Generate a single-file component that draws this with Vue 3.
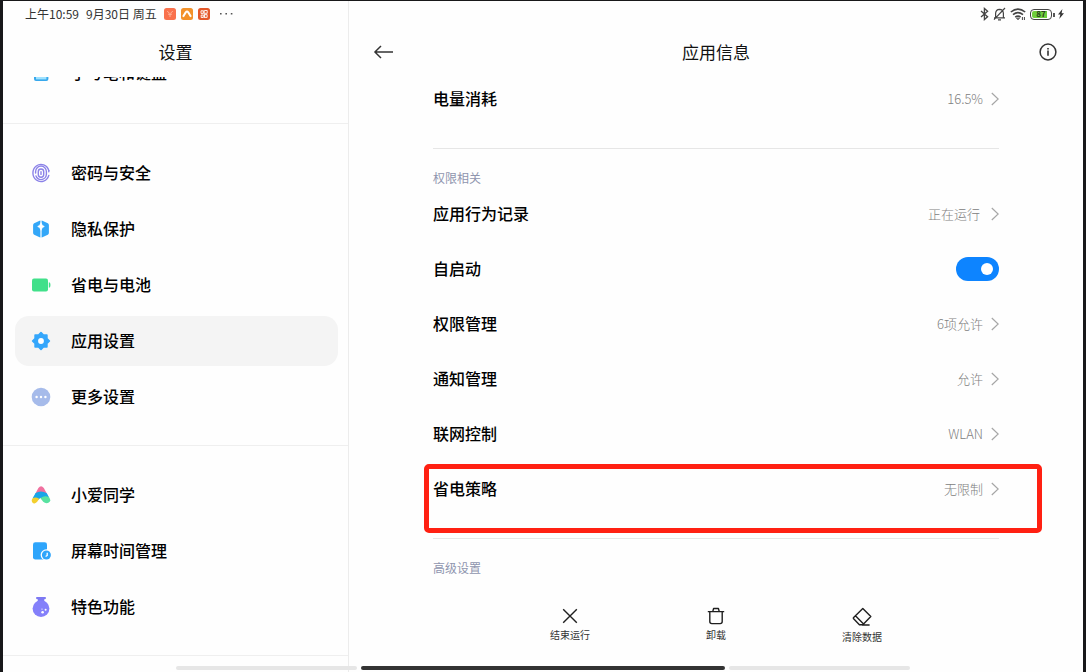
<script setup>
import { ref } from 'vue'

const groups = [
  [{ name: '手写笔和键盘', icon: 'pen' }],
  [
    { name: '密码与安全', icon: 'finger' },
    { name: '隐私保护', icon: 'privacy' },
    { name: '省电与电池', icon: 'battery' },
    { name: '应用设置', icon: 'gear' },
    { name: '更多设置', icon: 'more' },
  ],
  [
    { name: '小爱同学', icon: 'ai' },
    { name: '屏幕时间管理', icon: 'time' },
    { name: '特色功能', icon: 'flask' },
  ],
]
const selected = ref('应用设置')
const autoStart = ref(true)

const permissions = [
  { name: '应用行为记录', value: '正在运行', wide: true },
  { name: '自启动', toggle: true },
  { name: '权限管理', value: '6项允许' },
  { name: '通知管理', value: '允许' },
  { name: '联网控制', value: 'WLAN' },
  { name: '省电策略', value: '无限制', marked: true },
]
</script>

<template>
  <div class="screen">
    <aside class="side">
      <div class="status">
        <span>上午10:59</span>
        <span class="date">9月30日 周五</span>
        <svg class="app" viewBox="0 0 12 12"><rect width="12" height="12" rx="2.5" fill="#f9714d" /><path d="M3.2 3l2 2M8.8 3l-2 2M4 6.2h4M6 5v4" stroke="#ffc3ab" stroke-width=".8" fill="none" /></svg>
        <svg class="app" viewBox="0 0 12 12"><rect width="12" height="12" rx="2.5" fill="#f3922b" /><path d="M2 8.8L4.7 4.4Q6 2.8 7.3 4.4L10 8.8" stroke="#fff" stroke-width="2" fill="none" /></svg>
        <svg class="app" viewBox="0 0 12 12"><rect width="12" height="12" rx="2.5" fill="#e4582a" /><path d="M3 2.8h2.3v2.6H3zM6.7 2.5h2.5v2.8H6.7M3.2 7h2v2.5h-2zM6.6 6.6h2.5v2.8H6.6zM6.2 2v8" stroke="#fff" stroke-width=".9" fill="none" /></svg>
        <svg class="dots" viewBox="0 0 13 4"><path d="M0 1h1.6v1.6H0zM5.4 1H7v1.6H5.4zM10.8 1h1.6v1.6h-1.6z" fill="#555" /></svg>
      </div>
      <header class="side-head"><h1>设置</h1></header>
      <nav class="side-scroll">
        <div class="side-list">
          <div v-for="(group, g) in groups" :key="g" class="group">
            <button
              v-for="item in group"
              :key="item.name"
              type="button"
              class="nav-item"
              :class="{ active: item.name === selected }"
              @click="selected = item.name"
            >
              <svg v-if="item.icon === 'pen'" class="icon" viewBox="0 0 20 20"><rect x="3" y="2" width="14.4" height="16" rx="2" fill="#38a8ec" /><path d="M5 4h10.4v12.4H5z" fill="#9fe2ff" /></svg>
              <svg v-else-if="item.icon === 'finger'" class="icon" viewBox="0 0 20 20" fill="none" stroke="#8b82e8" stroke-width="1.4" stroke-linecap="round">
                <path d="M17.8 7.6A8.1 8.6 0 1 0 17.8 12.4" /><path d="M17.8 7.6v1.1" />
                <path d="M4.6 10V8.6A5.4 5.6 0 0 1 15.4 8.6V11.4A5.4 5.6 0 0 1 10 16.6Q6.3 16.6 5 13" />
                <rect x="7.3" y="6" width="5.4" height="8.2" rx="2.7" /><path d="M10 8.8v2.6" />
              </svg>
              <svg v-else-if="item.icon === 'privacy'" class="icon" viewBox="0 0 20 20">
                <path d="M10 1.4Q10.7 1.4 11.4 1.8L16.8 4.3Q17.9 4.9 17.9 6.2V13.8Q17.9 15.1 16.8 15.7L11.4 18.2Q10 18.9 8.6 18.2L3.2 15.7Q2.1 15.1 2.1 13.8V6.2Q2.1 4.9 3.2 4.3L8.6 1.8Q9.3 1.4 10 1.4z" fill="#33a7f8" />
                <path d="M10 1v18" stroke="#fff" stroke-width="1.2" /><path d="M10 3.6Q10.6 6.6 13.4 7.5Q10.6 8.4 10 11.4Q9.4 8.4 6.6 7.5Q9.4 6.6 10 3.6z" fill="#fff" stroke="#fff" stroke-width=".5" />
              </svg>
              <svg v-else-if="item.icon === 'battery'" class="icon" viewBox="0 0 20 20" fill="#41e08a"><rect x="1" y="3.6" width="16" height="12.8" rx="2" /><path d="M17.8 7.2Q19.4 7.4 19.4 9v2q0 1.6-1.6 1.8z" /></svg>
              <svg v-else-if="item.icon === 'gear'" class="icon" viewBox="0 0 20 20">
                <path d="M10 1.6L12.4 4.1H15.9V7.6L18.4 10L15.9 12.4V15.9H12.4L10 18.4L7.6 15.9H4.1V12.4L1.6 10L4.1 7.6V4.1H7.6z" fill="#34a6fb" stroke="#34a6fb" stroke-width="1.6" stroke-linejoin="round" /><circle cx="10" cy="10" r="2.9" fill="#fff" />
              </svg>
              <svg v-else-if="item.icon === 'more'" class="icon" viewBox="0 0 20 20"><circle cx="10" cy="10" r="9.3" fill="#a6bbea" /><g fill="#fff"><circle cx="5.6" cy="10" r="1.2" /><circle cx="10" cy="10" r="1.2" /><circle cx="14.4" cy="10" r="1.2" /></g></svg>
              <svg v-else-if="item.icon === 'ai'" class="icon" viewBox="0 0 20 20">
                <path d="M4.2 9L7.4 2.9Q10 -.4 12.8 2.9L16.4 9.4L10 13z" fill="#f0709f" />
                <path d="M1.6 13.2L4.6 8Q10 4.8 15.8 8.2L18.2 12.6L12 14L9.6 12.8L7 15z" fill="#18a5e8" />
                <path d="M1.2 13.8Q4 11 8.2 13.8L6.4 16.6Q4.6 19 2.4 18.2Q-.2 17 1.2 13.8z" fill="#f3cf2e" />
                <path d="M9.4 13.2Q14 9.4 18.3 12.6Q20.4 16 17.8 17.6Q14.8 19 12.2 16.8z" fill="#58e2a0" />
              </svg>
              <svg v-else-if="item.icon === 'time'" class="icon" viewBox="0 0 20 20">
                <rect x="2" y="1.2" width="14" height="17.4" rx="2.4" fill="#2ea5fb" /><circle cx="15.4" cy="14" r="5.8" fill="#fff" /><circle cx="15.4" cy="14" r="4.5" fill="#2ea5fb" /><path d="M16.2 11.8V14.4L14.6 15.6" stroke="#fff" stroke-width="1.3" fill="none" />
              </svg>
              <svg v-else class="icon" viewBox="0 0 20 20">
                <path d="M6 0h8q1 0 1 1.1T14 2.2h-.8V5H6.8V2.2H6Q5 2.2 5 1.1T6 0z" fill="#7d79f3" /><circle cx="10" cy="11.6" r="8.4" fill="#8480fa" /><circle cx="11.6" cy="15.2" r="1.3" fill="#fff" /><circle cx="14.6" cy="12.7" r="1" fill="#fff" /><circle cx="11" cy="12.1" r=".6" fill="#fff" />
              </svg>
              <span>{{ item.name }}</span>
            </button>
          </div>
        </div>
      </nav>
    </aside>

    <main class="detail">
      <div class="status right">
        <svg width="9" height="14" viewBox="0 0 9 14" fill="none" stroke="#444" stroke-width="1.3"><path d="M1 4l6.6 5.8L4.4 12.6V1.4L7.6 4.2L1 10" /></svg>
        <svg width="13" height="14" viewBox="0 0 13 14" fill="none" stroke="#444" stroke-width="1.2"><path d="M2.6 10.5V6.4Q2.8 2.4 6.5 2.3Q10.2 2.4 10.4 6.4V10.5M1 10.8h11M5 12.9h3M12 1L1 12.6" /></svg>
        <svg width="16" height="14" viewBox="0 0 16 14" fill="none" stroke="#444" stroke-width="1.6"><path d="M.8 5Q8 -.8 15.2 5M3 7.7Q8 3.6 13 7.7M5.2 10.2Q8 8 10.6 10.2" /><path d="M6.6 11.2L8 12.8L9.4 11.2zM12.4 10v3M14.4 10v3" stroke-width="1" /></svg>
        <span class="cell"><i></i><b>87</b></span>
        <svg width="6" height="12" viewBox="0 0 6 12" fill="#333"><path d="M4.4 1L0 6.4H2.4L1.2 11L6 5.2H3.6z" /></svg>
      </div>
      <header class="detail-head">
        <button type="button" class="plain" aria-label="返回">
          <svg width="19" height="14" viewBox="0 0 19 14" fill="none" stroke="#333" stroke-width="1.5" stroke-linejoin="round"><path d="M19 7H.9M7 1L.9 7L7 13" /></svg>
        </button>
        <h1>应用信息</h1>
        <button type="button" class="plain" aria-label="信息">
          <svg width="18" height="18" viewBox="0 0 18 18"><circle cx="9" cy="9" r="7.9" fill="none" stroke="#333" stroke-width="1.5" /><path d="M8.2 7.6h1.6v5.2H8.2zM8.2 5h1.6v1.6H8.2z" fill="#333" /></svg>
        </button>
      </header>
      <div class="detail-scroll">
        <section class="block first">
          <button type="button" class="row">
            <span class="name">电量消耗</span><span class="value">16.5%</span>
            <svg class="chev" viewBox="0 0 8 14"><path d="M.8 1L7.2 7L.8 13" /></svg>
          </button>
        </section>
        <section class="block">
          <h2>权限相关</h2>
          <template v-for="p in permissions" :key="p.name">
            <label v-if="p.toggle" class="row">
              <span class="name">{{ p.name }}</span>
              <input v-model="autoStart" type="checkbox" class="switch" />
            </label>
            <button v-else type="button" class="row" :class="{ marked: p.marked }">
              <span class="name">{{ p.name }}</span>
              <span class="value" :class="{ wide: p.wide }">{{ p.value }}</span>
              <svg class="chev" viewBox="0 0 8 14"><path d="M.8 1L7.2 7L.8 13" /></svg>
            </button>
          </template>
        </section>
        <section class="block">
          <h2>高级设置</h2>
        </section>
      </div>
      <footer class="tools">
        <button type="button" class="tool">
          <svg width="18" height="18" viewBox="0 0 18 18"><path d="M2.2 2.2l13.6 13.6M15.8 2.2L2.2 15.8" /></svg>
          <span>结束运行</span>
        </button>
        <button type="button" class="tool">
          <svg width="18" height="18" viewBox="0 0 18 18"><path d="M.8 4.6h16.4M5.8 4.4L6.6 1.5h4.8l.8 2.9M2.8 4.8V14.6Q2.8 16.6 4.8 16.6H13.2Q15.2 16.6 15.2 14.6V4.8" /></svg>
          <span>卸载</span>
        </button>
        <button type="button" class="tool">
          <svg width="20" height="20" viewBox="0 0 20 20"><path d="M10.8 1.4L18.8 9.6L10.8 17.8H7.4L1.4 11.6V10.8zM3.4 8.8L11.6 17M10 18h7.6" /></svg>
          <span>清除数据</span>
        </button>
      </footer>
    </main>
    <div class="home"><i></i><i class="dark"></i><i></i></div>
  </div>
</template>

<style>
body { margin: 0; background: #18181a; }
</style>

<style scoped>
.screen {
  position: relative;
  display: flex;
  box-sizing: border-box;
  height: 100vh;
  border: solid #18181a;
  border-width: 1px 3px 0;
  background: #fefefe;
  color: #000;
  font-family: "Noto Sans CJK SC", sans-serif;
  overflow: hidden;
}
button {
  border: 0;
  background: none;
  padding: 0;
  font: inherit;
  color: inherit;
  text-align: left;
  cursor: pointer;
}
svg { flex: none; display: block; }
h1 { margin: 0; font-size: 17px; font-weight: 400; line-height: 24px; color: #111; }
.side {
  display: flex;
  flex-direction: column;
  box-sizing: border-box;
  width: 346px;
  flex: none;
  border-right: 1px solid #ececec;
}
.status {
  display: flex;
  align-items: center;
  flex: none;
  height: 26px;
  padding-left: 22px;
  font-size: 12px;
  color: #333;
}
.status > span:not(.cell) { padding-bottom: 2px; }
.date { margin: 0 7px; }
.app { width: 12px; height: 12px; margin-right: 5px; }
.dots { width: 13px; height: 4px; margin-left: 5px; }
.side-head {
  display: flex;
  align-items: center;
  justify-content: center;
  flex: none;
  height: 50px;
}
.side-scroll { flex: 1; min-height: 0; overflow: hidden; }
.side-list { margin-top: -53px; }
.group {
  display: flex;
  flex-direction: column;
  gap: 6px;
  padding: 24px 10px 23px 12px;
  border-bottom: 1px solid #efefef;
}
.group:first-child { padding-bottom: 25px; }
.nav-item {
  display: flex;
  align-items: center;
  gap: 20px;
  height: 50px;
  padding: 0 16px;
  border-radius: 14px;
  font-size: 16px;
  font-weight: 500;
}
.nav-item span { padding-bottom: 2px; }
.nav-item.active { background: #f4f4f4; }
.icon { width: 20px; height: 20px; }

.detail { display: flex; flex-direction: column; flex: 1; min-width: 0; }
.right { justify-content: flex-end; gap: 4px; padding: 0 19px 0 0; }
.cell {
  position: relative;
  display: flex;
  align-items: center;
  justify-content: center;
  box-sizing: border-box;
  width: 22px;
  height: 11px;
  margin-right: 2px;
  border: 1px solid #444;
  border-radius: 4px;
  background: linear-gradient(90deg, #6fce3c 84%, #fff 84%) content-box;
  padding: 1px;
}
.cell i { position: absolute; right: -4px; top: 3px; width: 2px; height: 4px; background: #555; }
.cell b { font-size: 8px; line-height: 8px; color: #26401c; }
.detail-head {
  display: flex;
  align-items: center;
  justify-content: space-between;
  flex: none;
  height: 50px;
  padding: 0 26px 0 25px;
}
.detail-scroll { flex: 1; min-height: 0; padding: 0 84px; }
.block { border-bottom: 1px solid #e6e6e6; padding-bottom: 22px; }
.block:last-child { border: 0; }
.block.first { margin-top: -6px; }
h2 {
  margin: 0;
  padding-top: 20px;
  font-size: 12px;
  line-height: 17px;
  font-weight: 400;
  color: #8f95ae;
}
.row { position: relative; display: flex; align-items: center; width: 100%; height: 55px; }
.name { flex: 1; font-size: 16px; font-weight: 500; padding-bottom: 2px; }
.value { font-size: 13px; font-weight: 300; color: #808080; margin-right: 8px; padding-bottom: 1px; }
.value.wide { margin-right: 11px; }
.chev { width: 8px; height: 14px; fill: none; stroke: #a6a6a6; stroke-width: 1.2; }
.marked::after {
  content: "";
  position: absolute;
  inset: 3px -43px -17px -9px;
  border: 5px solid #ff2012;
  border-radius: 5px;
}
.switch {
  appearance: none;
  display: flex;
  align-items: center;
  box-sizing: border-box;
  width: 43px;
  height: 24px;
  margin: 0;
  padding: 0 6px;
  border-radius: 12px;
  background: #d8d8d8;
}
.switch::before { content: ""; width: 12px; height: 12px; border-radius: 50%; background: #fff; }
.switch:checked { background: #0d84ff; justify-content: flex-end; }
.tools {
  display: grid;
  grid-template-columns: repeat(3, 146px);
  justify-content: center;
  align-items: start;
  flex: none;
  height: 65px;
}
.tool { display: flex; flex-direction: column; align-items: center; gap: 3px; color: #333; }
.tool svg { fill: none; stroke: #1f1f1f; stroke-width: 1.4; stroke-linejoin: round; }
.tool span { font-size: 10px; line-height: 14px; }
.home {
  position: absolute;
  left: 16%;
  right: 16%;
  bottom: 2px;
  display: grid;
  grid-template-columns: 1fr 2fr 1fr;
  gap: 4px;
}
.home i { height: 4px; border-radius: 2px; background: #e6e6e6; }
.home .dark { background: #333; }
</style>
